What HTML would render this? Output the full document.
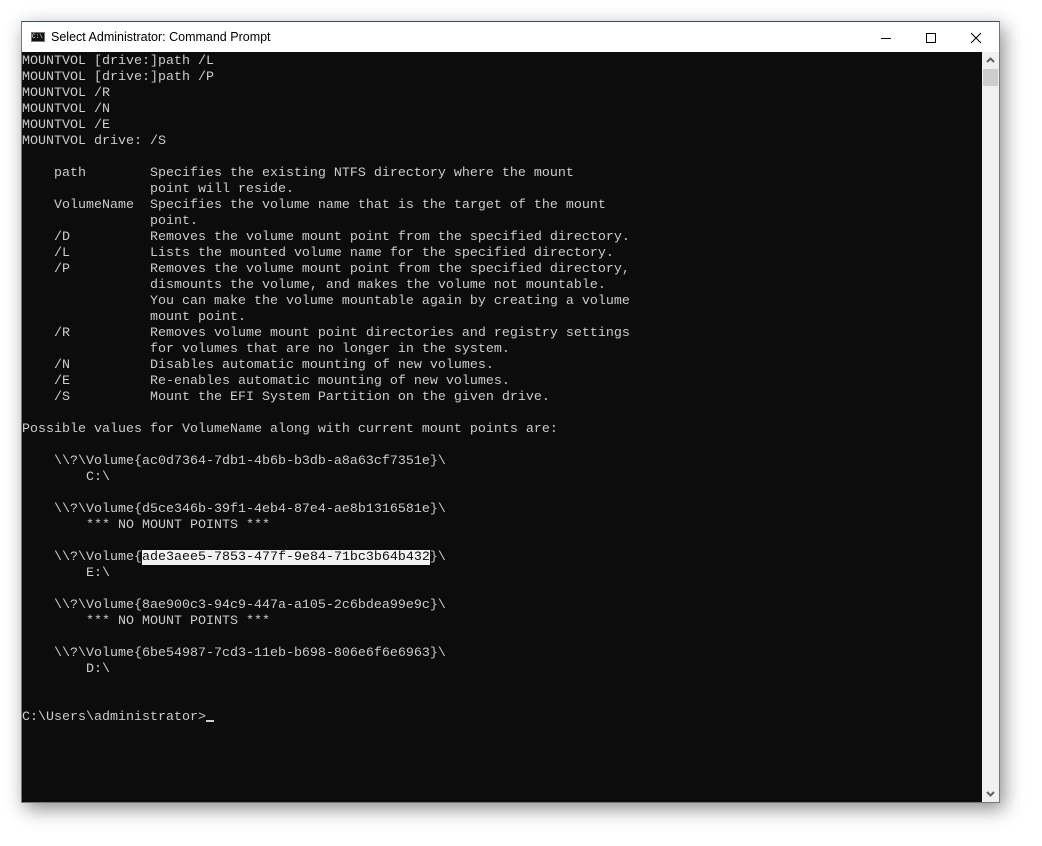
<!DOCTYPE html>
<html><head><style>
html,body{margin:0;padding:0;background:#fff;width:1042px;height:846px;overflow:hidden;position:relative}
.win{position:absolute;left:21px;top:21px;width:979px;height:782px;background:#0c0c0c;border:1px solid #3a4a6a;border-bottom-color:#777;border-left-color:#777;border-right-color:#777;box-shadow:4px 6px 18px rgba(0,0,0,0.45);box-sizing:border-box}
.title{position:absolute;left:0;top:0;right:0;height:30px;background:#fff;font-family:"Liberation Sans",sans-serif;font-size:12.5px;color:#000}
.title .t{position:absolute;left:29px;top:8px}
.icon{position:absolute;left:9px;top:10px;width:14px;height:10px;background:#111;border:1px solid #777;box-sizing:border-box;color:#fff;font-size:6px;line-height:8px;font-family:"Liberation Mono",monospace}
pre{position:absolute;left:0;top:32px;margin:0;font-family:"Liberation Mono",monospace;font-size:13.33px;line-height:16px;color:#cccccc;white-space:pre}
.hl{background:#f2f2f2;color:#0c0c0c}
.cur{display:inline-block;width:8px;height:2px;background:#ccc;vertical-align:-2px}
.sb{position:absolute;right:0;top:30px;width:17px;bottom:0;background:#f0f0f0}
.thumb{position:absolute;left:1px;top:17px;width:15px;height:17px;background:#cdcdcd}
</style></head><body>
<div class="win">
<div class="title"><div class="icon">C:\</div><span class="t">Select Administrator: Command Prompt</span>
<svg style="position:absolute;left:850px;top:6px" width="120" height="20"><line x1="9" y1="10.5" x2="19" y2="10.5" stroke="#000" stroke-width="1"/><rect x="54.5" y="5.5" width="9" height="9" fill="none" stroke="#000"/><path d="M99 5L109 15M109 5L99 15" stroke="#000" stroke-width="1"/></svg>
</div>
<pre>MOUNTVOL [drive:]path /L
MOUNTVOL [drive:]path /P
MOUNTVOL /R
MOUNTVOL /N
MOUNTVOL /E
MOUNTVOL drive: /S

    path        Specifies the existing NTFS directory where the mount
                point will reside.
    VolumeName  Specifies the volume name that is the target of the mount
                point.
    /D          Removes the volume mount point from the specified directory.
    /L          Lists the mounted volume name for the specified directory.
    /P          Removes the volume mount point from the specified directory,
                dismounts the volume, and makes the volume not mountable.
                You can make the volume mountable again by creating a volume
                mount point.
    /R          Removes volume mount point directories and registry settings
                for volumes that are no longer in the system.
    /N          Disables automatic mounting of new volumes.
    /E          Re-enables automatic mounting of new volumes.
    /S          Mount the EFI System Partition on the given drive.

Possible values for VolumeName along with current mount points are:

    \\?\Volume{ac0d7364-7db1-4b6b-b3db-a8a63cf7351e}\
        C:\

    \\?\Volume{d5ce346b-39f1-4eb4-87e4-ae8b1316581e}\
        *** NO MOUNT POINTS ***

    \\?\Volume{<span class="hl">ade3aee5-7853-477f-9e84-71bc3b64b432</span>}\
        E:\

    \\?\Volume{8ae900c3-94c9-447a-a105-2c6bdea99e9c}\
        *** NO MOUNT POINTS ***

    \\?\Volume{6be54987-7cd3-11eb-b698-806e6f6e6963}\
        D:\


C:\Users\administrator&gt;<span class="cur"></span></pre>
<div class="sb"><svg style="position:absolute;left:4px;top:5px" width="9" height="6"><path d="M1 5L4.5 1.5L8 5" stroke="#606060" stroke-width="2" fill="none"/></svg><div class="thumb"></div>
<svg style="position:absolute;left:4px;bottom:5px" width="9" height="6"><path d="M1 1L4.5 4.5L8 1" stroke="#606060" stroke-width="2" fill="none"/></svg></div>
</div>
</body></html>
